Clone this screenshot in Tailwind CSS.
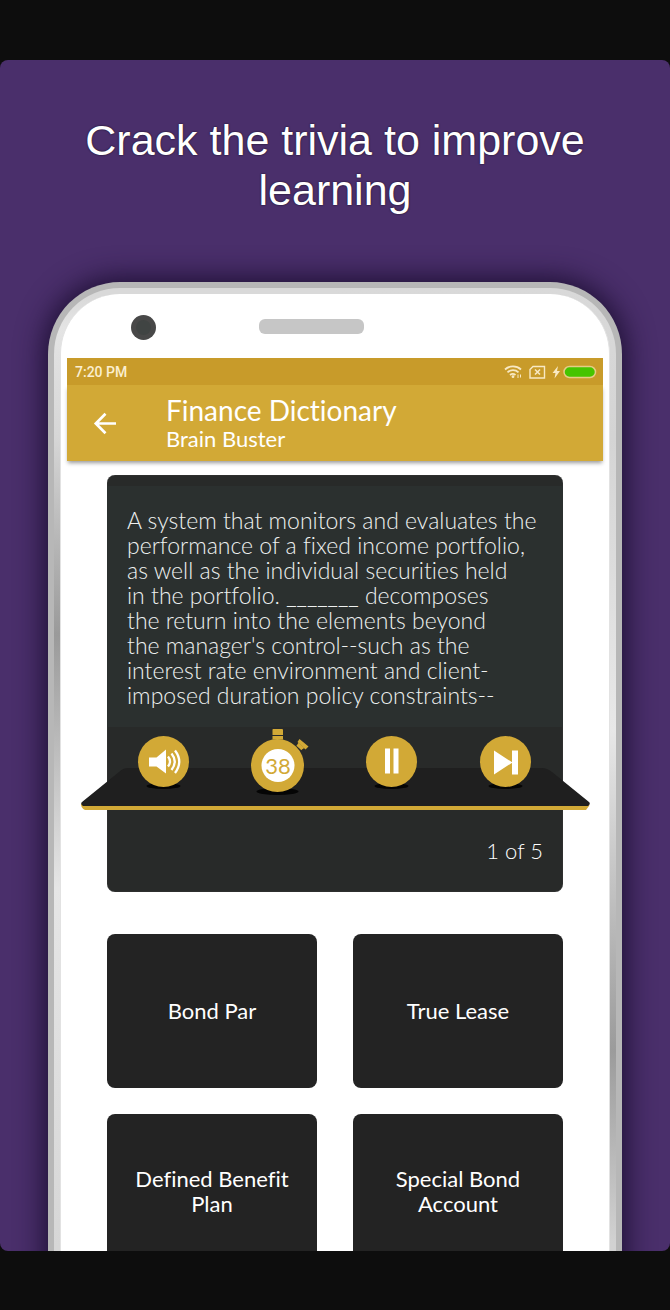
<!DOCTYPE html>
<html lang="en">
<head>
<meta charset="utf-8">
<meta name="viewport" content="width=device-width, initial-scale=1">
<title>Finance Dictionary – Brain Buster</title>
<script src="https://cdn.jsdelivr.net/npm/@tailwindcss/browser@4"></script>
</head>
<body class="bg-[#0d0d0d] min-h-screen pt-15 pb-[59px]">
<main class="h-[calc(100vh-119px)] overflow-hidden rounded-lg bg-[#4a2f6b] pt-[55px] flex flex-col">
  <h1 class="px-16 text-center text-white text-[43px] leading-[50px] font-['Liberation_Sans',Arial,sans-serif] [text-shadow:0_0_2px_#000000cc] shrink-0">Crack the trivia to improve learning</h1>

  <!-- Phone body -->
  <div class="mx-12 mt-[67px] shrink-0 rounded-t-[72px] bg-[#b7b7b7] p-[6px] pb-0 shadow-[0_0_28px_4px_#1d0f33]">
    <div class="rounded-t-[66px] p-[6px] pb-0 [background:linear-gradient(#d9d9d9_0px,#d9d9d9_8px,#e4e4e4_40px,#d6d6d6_150px,#9a9a9a_347px,#e6e6e6_600px,#d6d6d6_960px)_left/50%_100%_no-repeat,linear-gradient(#d9d9d9_0px,#d4d4d4_150px,#e8e8e8_442px,#9b9b9b_762px,#d2d2d2_955px)_right/50%_100%_no-repeat]">
      <div class="rounded-t-[60px] border-x border-[#e2e2e2] bg-white px-[6px] pb-16">
        <div class="flex h-16 items-center pl-16">
          <span class="size-[25px] rounded-full bg-[#484848] p-[5px] mt-[2px]"><span class="block size-full rounded-full bg-[#404443]"></span></span>
          <span class="ml-[103px] h-[15px] w-[105px] rounded-md bg-[#c6c6c6]"></span>
        </div>

        <div class="relative z-20 flex h-[27px] items-center bg-[#c89b2a] pl-2 pr-[6px] font-[Roboto,sans-serif] text-sm font-medium text-[#fbefd0]">
          <span class="grow">7:20 PM</span>
          <svg class="h-[18px] w-[94px]" viewBox="0 0 94 18" fill="none" stroke="#f8e9c4" role="img" aria-label="Wi-Fi, no SIM, battery charging">
            <path d="M2 6.500a12 12 0 0 1 16 0M4.500 9.300a8 8 0 0 1 11 0M7 12a4.500 4.500 0 0 1 5.500 0" stroke-width="1.800"/>
            <circle cx="10" cy="13.700" r="1.400" fill="#f8e9c4" stroke="none"/>
            <path d="M15 11.500v3.500M17.500 14.500v-3" stroke-width="1"/>
            <path d="M30 3.500h11.500v11.500H27V6.500z" stroke-width="1.400"/>
            <path d="M32 6.500l5 5M37 6.500l-5 5" stroke-width="1.600"/>
            <path d="M55 3l-5.500 7h3L51.500 15.500l5.500-7.500h-3z" fill="#f8e9c4" stroke="none"/>
            <rect x="61" y="3.500" width="31.500" height="11" rx="5.500" fill="#45c400" stroke="#e6cd85" stroke-width="1.500"/>
          </svg>
        </div>

        <header class="relative z-10 flex h-[76px] items-center bg-[#d2a936] pl-[26px] text-white shadow-[0_3px_4px_-1px_#00000066] font-[Lato,sans-serif] [font-variant-ligatures:none]">
          <button type="button" aria-label="Back" class="size-6">
            <svg viewBox="0 0 24 24" class="size-6" fill="none" stroke="#fff" stroke-width="2.700"><path d="M23 12.500H3.500M12.500 2.800 2.800 12.500l9.700 9.700"/></svg>
          </button>
          <div class="ml-[49px]">
            <h2 class="text-[28px] leading-8">Finance Dictionary</h2>
            <p class="text-[22px] leading-[26px]">Brain Buster</p>
          </div>
        </header>

        <div class="px-10 pt-[14px] font-[Lato,sans-serif] text-white [font-variant-ligatures:none]">
          <section class="rounded-lg bg-[#282a29] pt-[11px] shadow-[inset_0_0_1px_#666]">
            <p class="bg-[#2b302f] h-[241px] px-5 pt-[22px] text-[23px] font-light leading-[25px] text-[#eef0ef]">A system that monitors and evaluates the<br>performance of a fixed income portfolio,<br>as well as the individual securities held<br>in the portfolio. _______ decomposes<br>the return into the elements beyond<br>the manager's control--such as the<br>interest rate environment and client-<br>imposed duration policy constraints--</p>

            <!-- Control shelf, wider than the card -->
            <div class="relative h-[83px]">
              <svg class="absolute -left-[27px] top-[41px] h-[42px] w-[calc(100%+54px)]" viewBox="0 0 510 42" preserveAspectRatio="none">
                <path d="M4 35H507Q510 36 509 38L506 42H5Q1 40 1 36z" fill="#d2a936"/>
                <path d="M48 0H462Q467 0 472 4L509 34Q511 36 508 38H3Q0 36 2 34L39 4Q43 0 48 0z" fill="#1f1f1f"/>
              </svg>
              <div class="relative grid grid-cols-4 justify-items-center">
                <button type="button" aria-label="Sound">
                  <svg class="h-[66px] w-[60px]" viewBox="0 4 60 66">
                    <ellipse cx="29.500" cy="61" rx="17" ry="3" fill="#050505"/><circle cx="29.500" cy="36.500" r="25.500" fill="#d2a936"/>
                    <path d="M15 32.500h7.500l9.500-8v24l-9.500-7h-7.500z" fill="#fff"/>
                    <path d="M34 31.500q4 5 0 10M37.500 28.500q6.500 8 0 16.500M41 25.500q8.500 11 0 22.500" fill="none" stroke="#fff" stroke-width="2.300"/>
                  </svg>
                </button>
                <div class="relative h-[70px] w-[66px]" role="timer">
                  <svg class="size-full" viewBox="0 0 66 70">
                    <ellipse cx="32.500" cy="64.500" rx="21" ry="3.500" fill="#050505"/><circle cx="32.500" cy="38.500" r="26.500" fill="#d2a936"/><circle cx="33" cy="38.500" r="16.500" fill="#fff"/>
                    <path d="M28 2h9q1 0 1 1v5h-10.500v-5q0-1 .5-1zM27.500 9h10.500v3.500h-10.500z" fill="#d2a936"/>
                    <path d="M54.500 12 63.500 19.500 60.500 22.500 52.500 15z" fill="#d2a936"/><path d="M53 16.500 58.500 21.500M52 18l5 4.500" stroke="#d2a936" stroke-width="1.800"/>
                  </svg>
                  <span class="absolute inset-x-0 top-[24px] text-center text-[22px] leading-[30px] text-[#d2a936]">38</span>
                </div>
                <button type="button" aria-label="Pause">
                  <svg class="h-[66px] w-[60px]" viewBox="0 4 60 66">
                    <ellipse cx="29.500" cy="61" rx="17" ry="3" fill="#050505"/><circle cx="29.500" cy="36.500" r="25.500" fill="#d2a936"/>
                    <path d="M23 23.500h5v25h-5zM31.500 23.500h5v25h-5z" fill="#fff"/>
                  </svg>
                </button>
                <button type="button" aria-label="Next">
                  <svg class="h-[66px] w-[60px]" viewBox="0 4 60 66">
                    <ellipse cx="29.500" cy="61" rx="17" ry="3" fill="#050505"/><circle cx="29.500" cy="36.500" r="25.500" fill="#d2a936"/>
                    <path d="M18 25.500 36.500 37.500 18 49.500zM36 25.500h6v24h-6z" fill="#fff"/>
                  </svg>
                </button>
              </div>
            </div>
            <p class="h-[82px] px-5 pt-[27px] text-right text-[22px] font-light leading-7">1 of 5</p>
          </section>

          <div class="mt-[42px] grid grid-cols-2 gap-x-9 gap-y-[26px] text-[22px] leading-[25px]">
            <button type="button" class="h-[154px] rounded-lg bg-[#232323] px-4 pb-[2px]">Bond Par</button>
            <button type="button" class="h-[154px] rounded-lg bg-[#232323] px-4 pb-[2px]">True Lease</button>
            <button type="button" class="h-[154px] rounded-lg bg-[#232323] px-4">Defined Benefit<br>Plan</button>
            <button type="button" class="h-[154px] rounded-lg bg-[#232323] px-4">Special Bond<br>Account</button>
          </div>
        </div>
      </div>
    </div>
  </div>
</main>
</body>
</html>
